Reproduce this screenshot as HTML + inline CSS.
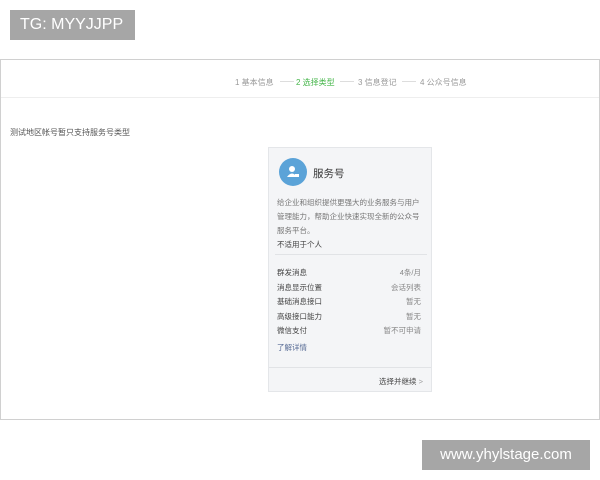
<!DOCTYPE html>
<html><head><meta charset="utf-8"><style>
*{margin:0;padding:0;box-sizing:border-box}
body{width:600px;height:480px;background:#fff;position:relative;overflow:hidden;font-family:"Liberation Sans","Noto Sans CJK SC",sans-serif;color:#333}
.a{position:absolute}
.tg{left:10px;top:10px;width:125px;height:30px;background:#a6a6a6;color:#fff;font-size:16px;line-height:30px;padding-left:10px}
.frame{left:0;top:59px;width:600px;height:361px;border:1px solid #d0d0d0}
.hl{left:1px;top:97px;width:598px;height:1px;background:#eee}
.step{top:77px;font-size:8px;color:#999}
.dash{top:81px;width:14px;height:1px;background:#ddd}
.card{left:268px;top:147px;width:164px;height:245px;background:#f4f5f7;border:1px solid #e4e6e9}
.c{font-size:7.5px;color:#444}
.r{right:10px;font-size:7.5px;color:#888;text-align:right}
.wm{left:422px;top:440px;width:168px;height:30px;background:#a6a6a6;color:#fff;font-size:15px;line-height:30px;text-align:center}
</style></head><body>
<div class="a tg">TG: MYYJJPP</div>
<div class="a frame"></div>
<div class="a hl"></div>
<div class="a step" style="left:235px">1 基本信息</div>
<div class="a dash" style="left:280px"></div>
<div class="a step" style="left:296px;color:#44b549">2 选择类型</div>
<div class="a dash" style="left:340px"></div>
<div class="a step" style="left:358px">3 信息登记</div>
<div class="a dash" style="left:402px"></div>
<div class="a step" style="left:420px">4 公众号信息</div>
<div class="a" style="left:10px;top:127px;font-size:8px;color:#555">测试地区帐号暂只支持服务号类型</div>
<div class="a card">
 <div class="a" style="left:10px;top:10px;width:28px;height:28px;border-radius:50%;background:#5ba3d8"></div>
 <svg class="a" style="left:16px;top:16px" width="16" height="16" viewBox="0 0 16 16"><circle cx="7" cy="5" r="3" fill="#fff"/><path d="M2 13 Q7 6 12 13Z" fill="#fff"/><rect x="10" y="10" width="4" height="3" fill="#fff"/></svg>
 <div class="a" style="left:44px;top:18px;font-size:10.5px;color:#333">服务号</div>
 <div class="a c" style="left:8px;top:48px;width:146px;line-height:14px;color:#777">给企业和组织提供更强大的业务服务与用户管理能力，帮助企业快速实现全新的公众号服务平台。</div>
 <div class="a c" style="left:8px;top:91px">不适用于个人</div>
 <div class="a" style="left:6px;top:106px;width:152px;height:1px;background:#e1e3e6"></div>
 <div class="a c" style="left:8px;top:119px">群发消息</div><div class="a r" style="top:119px">4条/月</div>
 <div class="a c" style="left:8px;top:134px">消息显示位置</div><div class="a r" style="top:134px">会话列表</div>
 <div class="a c" style="left:8px;top:148px">基础消息接口</div><div class="a r" style="top:148px">暂无</div>
 <div class="a c" style="left:8px;top:163px">高级接口能力</div><div class="a r" style="top:163px">暂无</div>
 <div class="a c" style="left:8px;top:177px">微信支付</div><div class="a r" style="top:177px">暂不可申请</div>
 <div class="a c" style="left:8px;top:194px;color:#576b95">了解详情</div>
 <div class="a" style="left:0;top:219px;width:162px;height:1px;background:#e1e3e6"></div>
 <div class="a c" style="right:8px;top:228px">选择并继续 <span style="color:#999">&gt;</span></div>
</div>
<div class="a wm">www.yhylstage.com</div>
</body></html>
